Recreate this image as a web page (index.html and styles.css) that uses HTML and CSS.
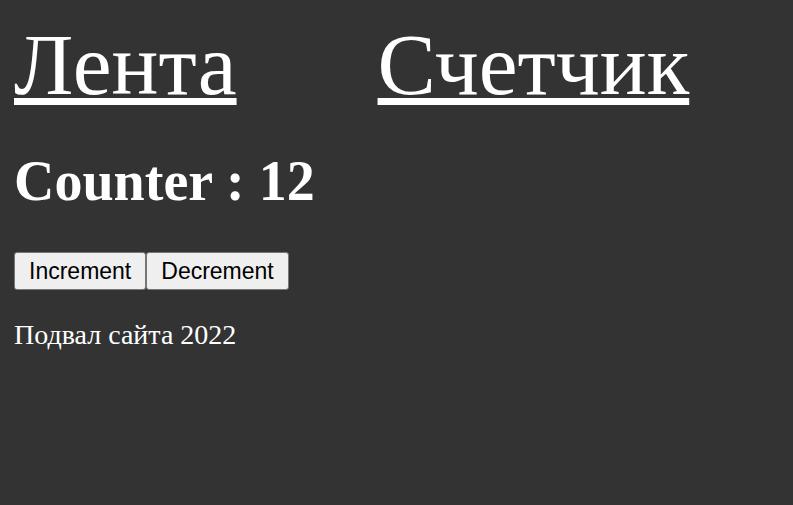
FILE: index.html
```html
<!DOCTYPE html>
<html lang="ru">
<head>
<meta charset="utf-8">
<title>Counter</title>
<link rel="stylesheet" href="styles.css">
</head>
<body>
<nav class="nav"><a class="nav-link" href="#">Лента</a><a class="nav-link" href="#">Счетчик</a></nav>
<main class="counter">
<h1 class="counter-title">Counter : 12</h1>
<div class="counter-buttons"><button class="btn">Increment</button><button class="btn">Decrement</button></div>
</main>
<footer class="footer"><p class="footer-text">Подвал сайта 2022</p></footer>
</body>
</html>
```
FILE: styles.css
```css
html {
  background: #333333;
}
body {
  margin: 14px;
  background: #333333;
  color: #ffffff;
  font-family: "Liberation Serif", "Times New Roman", serif;
  font-size: 28px;
}
.nav {
  display: flex;
  gap: 141px;
}
.nav-link {
  color: #ffffff;
  font-size: 87.5px;
  text-decoration: underline;
  text-decoration-thickness: 7px;
}
.counter-title {
  font-size: 56px;
  font-weight: bold;
  margin: 34px 0 39px;
}
.counter-buttons {
  display: flex;
}
.btn {
  font-family: "Liberation Sans", Arial, sans-serif;
  font-size: 23px;
  color: #000000;
  background: #efefef;
  border: 1px solid #767676;
  border-radius: 3px;
  padding: 4.5px 14px;
  margin: 0;
}
.footer-text {
  margin: 29px 0;
}
```
